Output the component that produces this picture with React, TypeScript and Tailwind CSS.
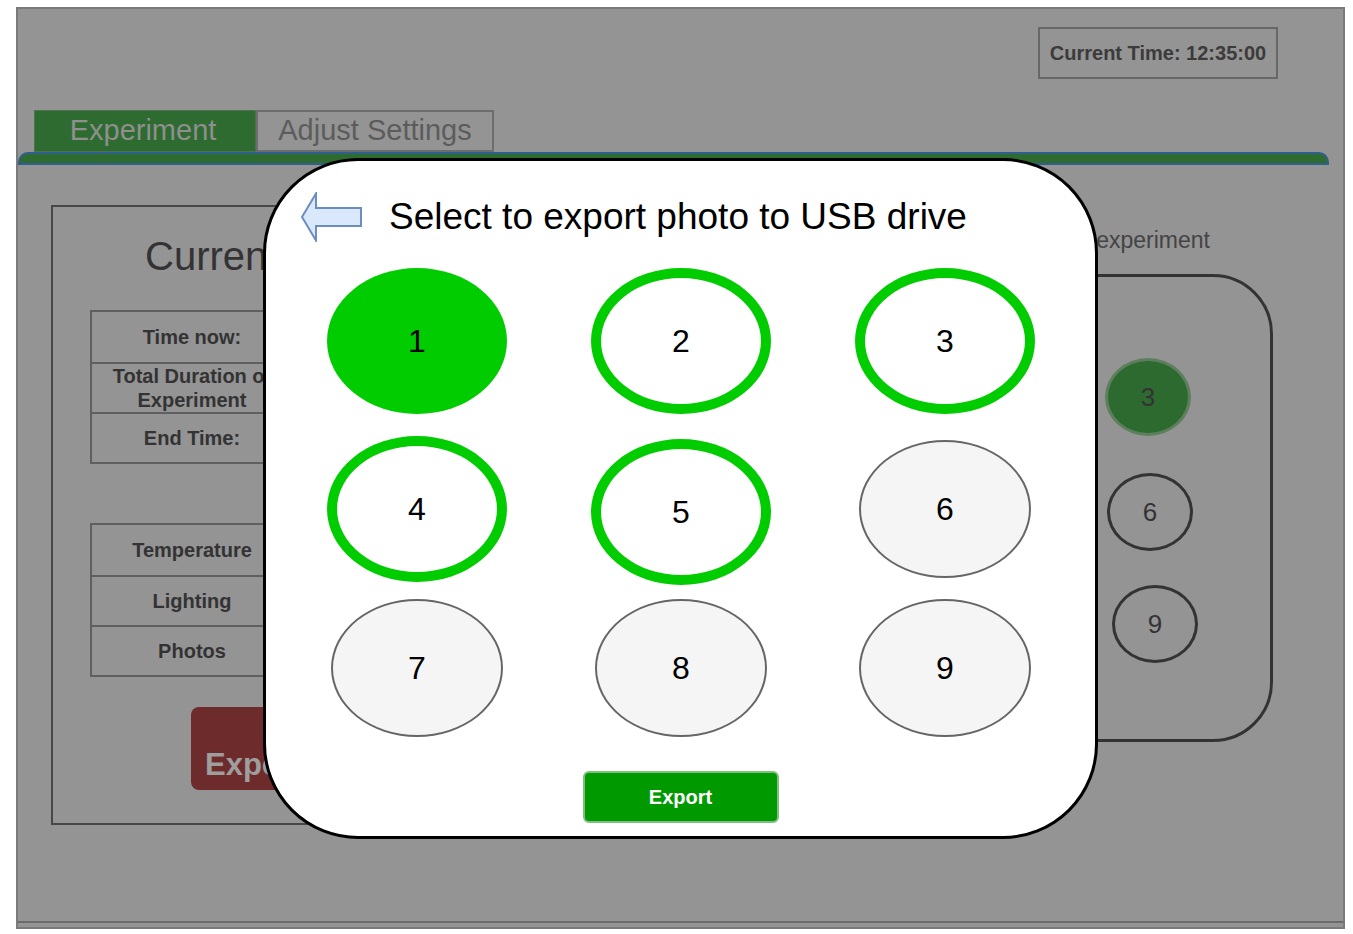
import React from 'react';

type Slot = { n: number; kind: 'filled' | 'ring' | 'plain'; dy?: number };

const modalRows: Slot[][] = [
  [
    { n: 1, kind: 'filled' },
    { n: 2, kind: 'ring' },
    { n: 3, kind: 'ring' },
  ],
  [
    { n: 4, kind: 'ring' },
    { n: 5, kind: 'ring', dy: 3 },
    { n: 6, kind: 'plain' },
  ],
  [
    { n: 7, kind: 'plain' },
    { n: 8, kind: 'plain' },
    { n: 9, kind: 'plain' },
  ],
];

function PhotoSlot({ n, kind, dy = 0 }: Slot) {
  let cls = '';
  if (kind === 'filled') cls = 'w-[180px] h-[146px] bg-[#00cc00]';
  if (kind === 'ring') cls = 'w-[180px] h-[146px] bg-white border-[10px] border-[#00cc00]';
  if (kind === 'plain') cls = 'w-[172px] h-[138px] bg-[#f5f5f5] border-[2.5px] border-[#666666]';
  return (
    <div className="w-[180px] h-[146px] flex items-center justify-center" style={{ marginTop: dy }}>
      <div className={`rounded-[50%] flex items-center justify-center text-[32px] text-black ${cls}`}>
        {n}
      </div>
    </div>
  );
}

function BackArrow() {
  return (
    <svg width="64" height="50" viewBox="0 0 64 50">
      <polygon
        points="2,25 16,1.5 16,16 61,16 61,34 16,34 16,48.5"
        fill="#dae8fc"
        stroke="#6c8ebf"
        strokeWidth="2"
        strokeLinejoin="miter"
      />
    </svg>
  );
}

function InfoTable({ rows }: { rows: string[] }) {
  return (
    <div className="border-2 border-[#5f5f5f] w-[380px]">
      {rows.map((r, i) => (
        <div key={r} className={`flex h-[50px] ${i > 0 ? 'border-t-2 border-[#5f5f5f]' : ''}`}>
          <div className="w-[202px] border-r-2 border-[#5f5f5f] flex items-center justify-center text-center text-[20px] leading-[24px] font-bold text-[#333333] px-1">
            {r}
          </div>
          <div className="flex-1" />
        </div>
      ))}
    </div>
  );
}

function SmallCircle({ n, active }: { n: number; active?: boolean }) {
  return (
    <div
      className={`w-[86px] h-[78px] rounded-[50%] flex items-center justify-center text-[26px] text-[#333333] ${
        active ? 'bg-[#2d6a2f] border-[3px] border-[#5e7f5e]' : 'border-[3px] border-[#333333]'
      }`}
    >
      {n}
    </div>
  );
}

export default function App() {
  return (
    <div className="w-[1353px] h-[934px] bg-white relative overflow-hidden font-['Liberation_Sans',Arial,sans-serif]">
      <div className="pl-[16px] pt-[7px]">
        <div className="w-[1329px] h-[922px] border-2 border-[#7a7a7a] bg-[#949494] flex flex-col">
          {/* header */}
          <div className="h-[101px] flex justify-end items-start pr-[65px]">
            <div className="mt-[18px] w-[240px] h-[52px] border-2 border-[#676767] flex items-center justify-center text-[20px] font-bold text-[#3b3b3b] whitespace-nowrap">
              Current Time: 12:35:00
            </div>
          </div>

          {/* tabs */}
          <div className="flex pl-[16px] h-[42px]">
            <div className="w-[222px] h-[42px] bg-[#2e6b30] border border-[#4b744b] flex items-center justify-center pr-[4px] text-[29px] text-[#8f8f8f]">
              Experiment
            </div>
            <div className="w-[238px] h-[42px] border-2 border-[#6d6d6d] flex items-center justify-center text-[29px] text-[#5c5c5c]">
              Adjust Settings
            </div>
          </div>
          <div className="w-[1311px] h-[13px] rounded-t-[10px] bg-[#2e6b30] border-2 border-[#2f5f8f]" />

          {/* content */}
          <div className="flex-1 mb-[4px] border-b-2 border-[#6b6b6b] flex justify-between pl-[33px] pt-[40px] pr-[70px]">
            <div className="w-[420px] h-[620px] border-2 border-[#474747] flex flex-col pl-[37px]">
              <div className="mt-[26px] ml-[55px] text-[40px] leading-[46px] text-[#333333] whitespace-nowrap">
                Current Experiment
              </div>
              <div className="mt-[31px]">
                <InfoTable rows={['Time now:', 'Total Duration of Experiment', 'End Time:']} />
              </div>
              <div className="mt-[59px]">
                <InfoTable rows={['Temperature', 'Lighting', 'Photos']} />
              </div>
              <div className="mt-[30px] ml-[101px] w-[210px] h-[83px] rounded-[8px] bg-[#6e2b2b] flex items-center pl-[14px] pt-[34px] text-[31px] font-bold text-[#9e9e9e]">
                Export
              </div>
            </div>

            <div className="w-[480px] flex flex-col">
              <div className="mt-[22px] pr-[63px] text-right text-[23px] leading-[26px] text-[#444444] whitespace-nowrap">
                Photos from experiment
              </div>
              <div className="mt-[21px] h-[468px] rounded-[60px] border-[3px] border-[#333333] flex flex-col items-end pr-[77px] pt-[81px]">
                <div className="flex gap-[44px] mr-[2px]">
                  <SmallCircle n={1} />
                  <SmallCircle n={2} />
                  <SmallCircle n={3} active />
                </div>
                <div className="flex gap-[44px] mt-[37px]">
                  <SmallCircle n={4} />
                  <SmallCircle n={5} />
                  <SmallCircle n={6} />
                </div>
                <div className="flex gap-[44px] mt-[34px] mr-[-5px]">
                  <SmallCircle n={7} />
                  <SmallCircle n={8} />
                  <SmallCircle n={9} />
                </div>
              </div>
            </div>
          </div>
        </div>
      </div>

      {/* export dialog */}
      <div className="absolute left-[263px] top-[158px] w-[835px] h-[681px] rounded-[95px] border-[3px] border-black bg-white flex flex-col">
        <div className="flex items-center pl-[34px] pt-[31px]">
          <BackArrow />
          <div className="ml-[25px] text-[37px] leading-[42px] text-black whitespace-nowrap">
            Select to export photo to USB drive
          </div>
        </div>
        <div className="flex flex-col pl-[61px] mt-[26px]">
          {modalRows.map((row, i) => (
            <div key={i} className={`flex items-start gap-[84px] ${i === 1 ? 'mt-[22px]' : i === 2 ? 'mt-[10px]' : ''}`}>
              {row.map((s) => (
                <PhotoSlot key={s.n} {...s} />
              ))}
            </div>
          ))}
        </div>
        <div className="flex justify-center mt-[30px]">
          <div className="w-[196px] h-[52px] rounded-[6px] bg-[#009900] border-2 border-[#7fc07f] flex items-center justify-center text-[20px] font-bold text-white">
            Export
          </div>
        </div>
      </div>
    </div>
  );
}
